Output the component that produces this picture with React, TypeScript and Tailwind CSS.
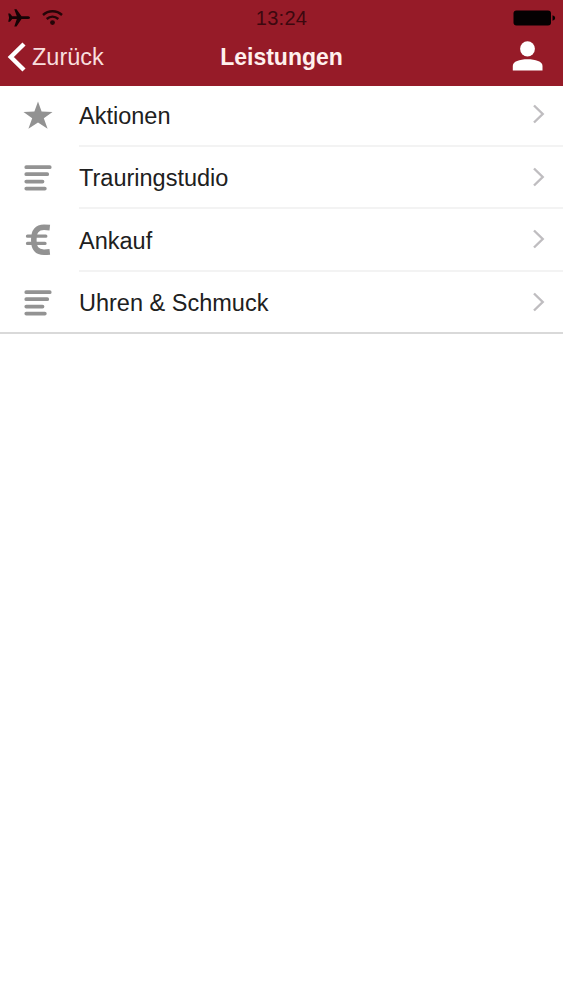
import type { ReactNode } from "react";

const StarIcon = () => (
  <svg width="30" height="28" viewBox="0 0 30 28" fill="#929292">
    <path d="M15 .5 18.6 10.6 29.5 10.9 20.8 17.2 24.6 27.7 15 21.6 5.4 27.7 9.2 17.2.5 10.9 11.4 10.6Z" />
  </svg>
);

const LinesIcon = () => (
  <svg width="28" height="28" viewBox="0 0 28 28" stroke="#939393" strokeWidth="3.8" strokeLinecap="round">
    <path d="M2.3 3.2H25.7M2.3 10.2H23.2M2.3 17.6H18.5M2.3 24.6H20.8" />
  </svg>
);

const EuroIcon = () => (
  <svg width="26" height="32" viewBox="0 0 26 32" fill="none" stroke="#929292">
    <path d="M24.8 3.6Q22 3.3 19 3.3C11.5 3.3 8.8 8 8.8 16C8.8 24 11.5 28.2 19 28.2Q22 28.2 24.8 27.9" strokeWidth="5.6" />
    <path d="M2.5 12.2H20.8M2.5 19.4H20" strokeWidth="3.3" strokeLinecap="round" />
  </svg>
);

const ChevronIcon = () => (
  <svg width="14" height="20" viewBox="0 0 14 20" fill="none" stroke="#bfbdc0" strokeWidth="2.4">
    <path d="M2 1.5 10.7 10 2 18.5" />
  </svg>
);

type RowProps = { label: string; icon: ReactNode; height: string; iconPad?: string; textPad?: string; last?: boolean };

const Row = ({ label, icon, height, iconPad = "pb-px", textPad = "pt-[2px]", last }: RowProps) => (
  <li className={`flex ${height}`}>
    <span className={`flex w-[76px] shrink-0 items-center justify-center ${iconPad}`}>{icon}</span>
    <div
      className={`ml-[3px] flex flex-1 items-center justify-between pr-[17px] ${textPad} ${
        last ? "" : "border-b-2 border-[#f3f3f3]"
      }`}
    >
      <span className="whitespace-nowrap text-[23.5px] leading-7 text-[#202020]">{label}</span>
      <span className="-mt-[3px]">
        <ChevronIcon />
      </span>
    </div>
  </li>
);

export default function App() {
  return (
    <main className="min-h-[1000px] w-full bg-white font-['Liberation_Sans',Arial,sans-serif]">
      <header className="h-[86px] bg-[#961b28]">
        <div className="grid h-9 grid-cols-3 items-center">
          <div className="flex items-center gap-[12px] pl-2">
            <svg width="22" height="20" viewBox="0 0 22 20" fill="#160305">
              <path d="M22 9.7C22 8.7 20.5 8.3 19 8.3H13.5L8.5 1.2H6.3L8.8 8.3H4.2L2 5.6H.2L1.1 9.7 .2 13.8H2L4.2 11.1H8.8L6.3 18.4H8.5L13.5 11.1H19C20.5 11.1 22 10.7 22 9.7Z" />
            </svg>
            <svg width="21" height="16" viewBox="0 0 21 16" fill="none" stroke="#250508" strokeWidth="2.4">
              <path d="M1 5C6.5 0 14.5 0 20 5M4.7 9C8.2 6 12.8 6 16.3 9" />
              <circle cx="10.5" cy="12.6" r="2.4" fill="#250508" stroke="none" />
            </svg>
          </div>
          <span className="text-center text-[20px] leading-5 tracking-[0.3px] text-[#3c080f]">13:24</span>
          <div className="flex justify-end pr-[7px]">
            <svg width="43" height="16" viewBox="0 0 43 16" fill="#050102">
              <rect x=".5" y=".5" width="37.5" height="15" rx="3" />
              <path d="M39.5 5.2Q42.2 6 42.2 8T39.5 10.8Z" />
            </svg>
          </div>
        </div>
        <div className="grid h-[42px] grid-cols-3 items-center">
          <div className="flex items-center gap-[6px] pl-[7px] text-[23.5px] leading-7 text-[#f8dedd]">
            <svg width="19" height="30" viewBox="0 0 19 30" fill="none" stroke="#fff" strokeWidth="4.4">
              <path d="M17 2 3.8 15 17 28" />
            </svg>
            <span>Zurück</span>
          </div>
          <h1 className="text-center text-[23px] font-bold leading-7 text-[#fff0ed]">Leistungen</h1>
          <div className="flex justify-end pb-[2px] pr-5">
            <svg width="31" height="30" viewBox="0 0 31 30" fill="#fff">
              <ellipse cx="15.5" cy="7.8" rx="7.4" ry="7.6" />
              <path d="M.8 29.5V25C.8 20.5 7.5 18.3 15.5 18.3S30.5 20.5 30.5 25V29.5Z" />
            </svg>
          </div>
        </div>
      </header>
      <ul className="border-b-2 border-[#d9d9d9]">
        <Row label="Aktionen" icon={<StarIcon />} height="h-[61px]" iconPad="pb-[3px]" textPad="" />
        <Row label="Trauringstudio" icon={<LinesIcon />} height="h-[62px]" />
        <Row label="Ankauf" icon={<EuroIcon />} height="h-[63px]" />
        <Row label="Uhren & Schmuck" icon={<LinesIcon />} height="h-[60px]" iconPad="pt-px" last />
      </ul>
    </main>
  );
}
